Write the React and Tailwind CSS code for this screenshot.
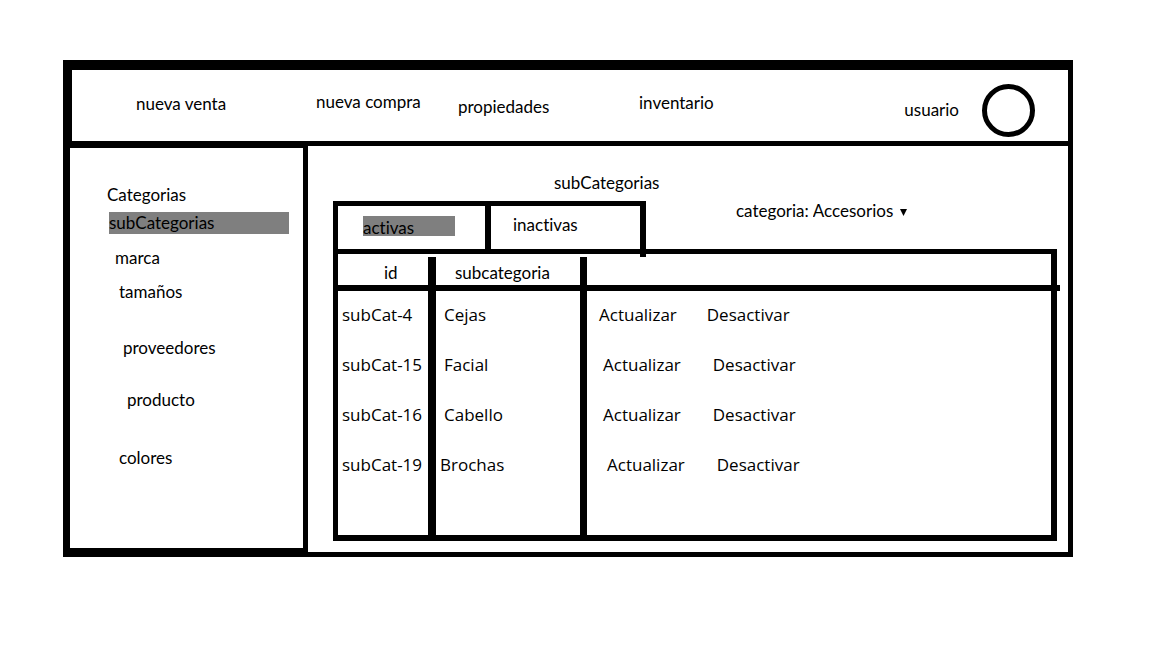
import { useState } from "react";

const navLinks = [
  { label: "nueva venta", space: "pt-6" },
  { label: "nueva compra", space: "pt-[22px]" },
  { label: "propiedades", space: "pt-[27px]" },
  { label: "inventario", space: "pt-[23px]" },
];

const sideLinks = [
  { label: "Categorias", space: "" },
  { label: "subCategorias", space: "mt-[7px] ml-0.5 mr-3.5 h-[22px] pt-px bg-[#7f7f7f]", current: true },
  { label: "marca", space: "mt-3.5 ml-2" },
  { label: "tamaños", space: "mt-3.5 ml-3" },
  { label: "proveedores", space: "mt-9 ml-4" },
  { label: "producto", space: "mt-8 ml-5" },
  { label: "colores", space: "mt-[38px] ml-3" },
];

const rows = [
  { id: "subCat-4", name: "Cejas", nameSpace: "pl-2", actions: "pl-3 gap-[30px]" },
  { id: "subCat-15", name: "Facial", nameSpace: "pl-2", actions: "pl-4 gap-8" },
  { id: "subCat-16", name: "Cabello", nameSpace: "pl-2", actions: "pl-4 gap-8" },
  { id: "subCat-19", name: "Brochas", nameSpace: "pl-1", actions: "pl-5 gap-8" },
];

function Header() {
  return (
    <header className="flex h-[76px] justify-between border-b-[5px] border-l-2 border-black pr-[33px] pl-16">
      <nav className="grid grid-cols-[180px_142px_181px_auto] items-start">
        {navLinks.map((link) => (
          <a key={link.label} href="#" className={`whitespace-nowrap ${link.space}`}>
            {link.label}
          </a>
        ))}
      </nav>
      <a href="#" className="flex items-center gap-[23px] pt-[10px]">
        <span className="pb-0.5">usuario</span>
        <svg className="size-[53px]" viewBox="0 0 53 53" fill="none" aria-hidden="true">
          <circle cx="26.5" cy="26.5" r="24" stroke="black" strokeWidth="5" />
        </svg>
      </a>
    </header>
  );
}

function Sidebar() {
  return (
    <aside className="w-[238px] shrink-0 border-t-2 border-r-[5px] border-b-4 border-black pt-[37px] pl-[37px]">
      <nav className="flex flex-col">
        {sideLinks.map((link) => (
          <a
            key={link.label}
            href="#"
            aria-current={link.current ? "page" : undefined}
            className={`block ${link.space}`}
          >
            {link.label}
          </a>
        ))}
      </nav>
    </aside>
  );
}

function Tabs({ active, onChange }) {
  return (
    <div role="tablist" className="relative flex h-12 border-t-[5px] border-l-[5px] border-black">
      <button
        type="button"
        role="tab"
        aria-selected={active === "activas"}
        onClick={() => onChange("activas")}
        className="flex w-[153px] items-start border-r-[6px] border-black pt-2.5 pl-[25px] text-left"
      >
        <span className={`h-5 w-[92px] pt-0.5 ${active === "activas" ? "bg-[#7f7f7f]" : ""}`}>
          activas
        </span>
      </button>
      <button
        type="button"
        role="tab"
        aria-selected={active === "inactivas"}
        onClick={() => onChange("inactivas")}
        className="flex w-[155px] items-start border-r-[6px] border-black pt-[9px] pl-[22px] text-left"
      >
        <span className={`h-5 w-[92px] ${active === "inactivas" ? "bg-[#7f7f7f]" : ""}`}>
          inactivas
        </span>
      </button>
      <span className="absolute top-full right-0 h-2 w-1.5 bg-black" />
    </div>
  );
}

function CategoryFilter() {
  return (
    <div className="ml-[90px] flex h-5 items-center">
      <label htmlFor="categoria" className="mr-1">
        categoria:
      </label>
      <select id="categoria" className="h-5 appearance-none bg-transparent p-0">
        <option>Accesorios</option>
      </select>
      <svg className="mt-0.5 ml-1.5 h-[7px] w-[7px]" viewBox="0 0 7 7" aria-hidden="true">
        <path d="M0 0H7L3.5 7Z" fill="black" />
      </svg>
    </div>
  );
}

function SubcategoryTable() {
  return (
    <div className="relative border-t-[5px] border-r-[6px] border-b-[6px] border-l-[5px] border-black">
      <span className="absolute top-[31px] left-full ml-[6px] h-1.5 w-[3px] bg-black" />
      <table className="w-full table-fixed border-separate border-spacing-0 text-left">
        <colgroup>
          <col className="w-[98px]" />
          <col className="w-[151px]" />
          <col />
        </colgroup>
        <thead>
          <tr>
            <th className="border-b-[6px] border-black p-0 pt-[3px] font-normal">
              <div className="h-7 border-r-8 border-black pt-1.5 pl-[46px]">id</div>
            </th>
            <th className="border-b-[6px] border-black p-0 pt-[3px] font-normal">
              <div className="h-7 border-r-[7px] border-black pt-1.5 pl-[19px]">subcategoria</div>
            </th>
            <th className="border-b-[6px] border-black p-0" aria-label="acciones" />
          </tr>
        </thead>
        <tbody className="align-top font-['Open_Sans','Noto_Sans',sans-serif] text-[17px] leading-6">
          {rows.map((row) => (
            <tr key={row.id} className="h-[50px] last:h-[94px]">
              <td className="border-r-8 border-black p-0 pt-3 pl-1 whitespace-nowrap">{row.id}</td>
              <td className={`border-r-[7px] border-black pt-3 ${row.nameSpace}`}>{row.name}</td>
              <td className="p-0 pt-3">
                <div className={`flex ${row.actions}`}>
                  <button type="button">Actualizar</button>
                  <button type="button">Desactivar</button>
                </div>
              </td>
            </tr>
          ))}
        </tbody>
      </table>
    </div>
  );
}

export default function App() {
  const [tab, setTab] = useState("activas");
  return (
    <div className="min-h-screen bg-white pt-[60px] pr-[79px] pl-[63px] font-['Lato',sans-serif] text-[17px] leading-5 text-black [font-variant-ligatures:none]">
      <div className="border-t-[10px] border-r-[5px] border-b-[5px] border-l-[7px] border-black">
        <Header />
        <div className="flex">
          <Sidebar />
          <main className="min-w-0 flex-1 pt-[27px] pr-[11px] pb-[11px] pl-[25px]">
            <h1 className="mb-2 pl-[221px]">subCategorias</h1>
            <div className="flex items-start">
              <Tabs active={tab} onChange={setTab} />
              <CategoryFilter />
            </div>
            <SubcategoryTable />
          </main>
        </div>
      </div>
    </div>
  );
}
